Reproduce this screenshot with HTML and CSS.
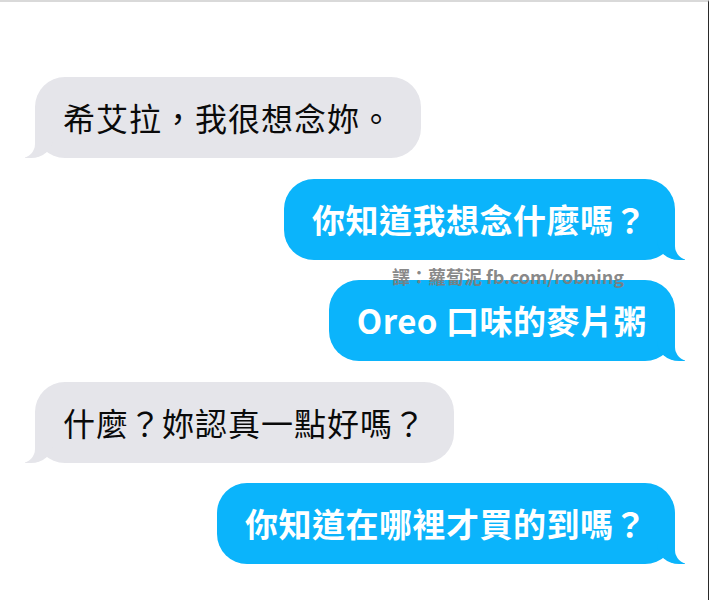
FILE: index.html
```html
<!DOCTYPE html>
<html lang="zh-Hant">
<head>
  <meta charset="UTF-8">
  <meta name="viewport" content="width=device-width, initial-scale=1.0">
  <title>Messages</title>
  <link rel="stylesheet" href="styles.css">
</head>
<body>
  <div class="screen">
    <div class="thread">
      <div class="row them">
        <div class="bubble">希艾拉，我很想念妳。</div>
      </div>
      <div class="row me">
        <div class="bubble">你知道我想念什麼嗎？</div>
      </div>
      <div class="row me">
        <div class="bubble">Oreo 口味的麥片粥</div>
        <span class="credit">譯：蘿蔔泥 fb.com/robning</span>
      </div>
      <div class="row them">
        <div class="bubble">什麼？妳認真一點好嗎？</div>
      </div>
      <div class="row me">
        <div class="bubble">你知道在哪裡才買的到嗎？</div>
      </div>
    </div>
  </div>
</body>
</html>
```

FILE: styles.css
```css
html, body {
  margin: 0;
  padding: 0;
  background: #fff;
}
.screen {
  width: 708px;
  height: 598px;
  border-top: 2px solid #d9d9d9;
  border-right: 1px solid #2a2a2a;
  background: #fff;
  font-family: "Noto Sans CJK TC", "Noto Sans", sans-serif;
}
.thread {
  display: flex;
  flex-direction: column;
  gap: 20.5px;
  padding-top: 75px;
}
.row {
  display: flex;
  position: relative;
}
.row.them {
  justify-content: flex-start;
  padding-left: 35px;
}
.row.me {
  justify-content: flex-end;
  padding-right: 33px;
}
.bubble {
  position: relative;
  padding: 20px 28px;
  line-height: 41px;
  border-radius: 30px;
  white-space: nowrap;
}
.them .bubble {
  background: #e5e5ea;
  color: #0a0a0a;
  font-size: 32px;
  letter-spacing: 1px;
}
.me .bubble {
  background: #0bb4fb;
  color: #fff;
  font-size: 33px;
  font-weight: 700;
  letter-spacing: 0.5px;
}

/* tails */
.bubble::before,
.bubble::after {
  content: "";
  position: absolute;
  bottom: 0;
  height: 35px;
}
.them .bubble::before {
  left: -10px;
  width: 28px;
  background: #e5e5ea;
  border-bottom-right-radius: 22px 20px;
}
.them .bubble::after {
  left: -30px;
  width: 30px;
  background: #fff;
  border-bottom-right-radius: 14px;
}
.me .bubble::before {
  right: -10px;
  width: 28px;
  background: #0bb4fb;
  border-bottom-left-radius: 22px 20px;
}
.me .bubble::after {
  right: -30px;
  width: 30px;
  background: #fff;
  border-bottom-left-radius: 14px;
}

.credit {
  position: absolute;
  top: -16px;
  left: 392px;
  font-size: 18px;
  font-weight: 700;
  line-height: 24px;
  color: rgba(125, 125, 125, 0.92);
  white-space: nowrap;
}
```
